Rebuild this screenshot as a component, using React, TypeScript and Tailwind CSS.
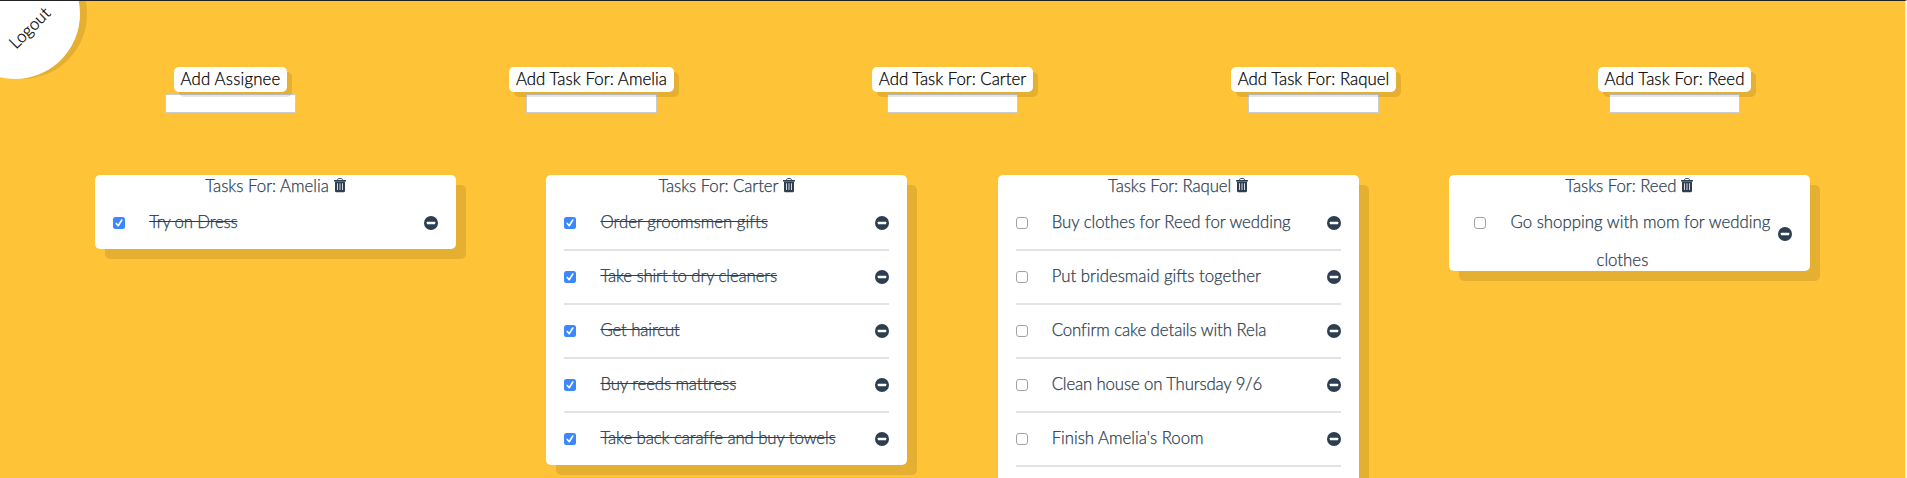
type Task = { text: string; done?: boolean; tracking?: string };
type Person = { title: string; tracking: string; tasks: Task[]; more?: boolean };

const forms = [
  { label: "Add Assignee", size: "w-[113px] tracking-[0.2px]" },
  { label: "Add Task For: Amelia", size: "w-[165px] tracking-[0.07px]" },
  { label: "Add Task For: Carter", size: "w-[161px]" },
  { label: "Add Task For: Raquel", size: "w-[165px] tracking-[0.05px]" },
  { label: "Add Task For: Reed", size: "w-[153px] tracking-[0.12px]" },
];

const people: Person[] = [
  {
    title: "Tasks For: Amelia",
    tracking: "tracking-normal",
    tasks: [{ text: "Try on Dress", done: true, tracking: "tracking-[-0.17px]" }],
  },
  {
    title: "Tasks For: Carter",
    tracking: "tracking-[-0.07px]",
    tasks: [
      { text: "Order groomsmen gifts", done: true, tracking: "tracking-[0.02px]" },
      { text: "Take shirt to dry cleaners", done: true, tracking: "tracking-[-0.12px]" },
      { text: "Get haircut", done: true, tracking: "tracking-[-0.12px]" },
      { text: "Buy reeds mattress", done: true, tracking: "tracking-[-0.1px]" },
      { text: "Take back caraffe and buy towels", done: true, tracking: "tracking-[-0.09px]" },
    ],
  },
  {
    title: "Tasks For: Raquel",
    tracking: "tracking-[-0.08px]",
    more: true,
    tasks: [
      { text: "Buy clothes for Reed for wedding", tracking: "tracking-[-0.04px]" },
      { text: "Put bridesmaid gifts together" },
      { text: "Confirm cake details with Rela", tracking: "tracking-[-0.07px]" },
      { text: "Clean house on Thursday 9/6", tracking: "tracking-[-0.14px]" },
      { text: "Finish Amelia's Room" },
    ],
  },
  {
    title: "Tasks For: Reed",
    tracking: "tracking-[-0.04px]",
    tasks: [{ text: "Go shopping with mom for wedding clothes", tracking: "tracking-[0.02px]" }],
  },
];

function Trash() {
  return (
    <svg viewBox="0 0 12 15" className="mt-[3px] h-[15px] w-3 shrink-0" fill="currentColor">
      <path d="M3.4 2.2 4 .8Q4.2.5 4.6.5h2.8q.4 0 .6.3l.6 1.4" fill="none" stroke="currentColor" strokeWidth=".9" />
      <rect y="2" width="12" height="1.6" rx=".3" />
      <path
        fillRule="evenodd"
        d="M1 3.4h10v9.4q0 1.5-1.4 1.5H2.4Q1 14.3 1 12.8ZM3.2 5.2v6.900h.8V5.200ZM5.600 5.200v6.900h.8V5.200ZM8 5.200v6.900h.8V5.200Z"
      />
    </svg>
  );
}

function Minus() {
  return (
    <svg viewBox="0 0 14 14" className="size-3.5 shrink-0">
      <circle cx="7" cy="7" r="7" fill="#2c3e50" />
      <rect x="2.8" y="5.8" width="8.4" height="2.4" rx=".4" fill="#fff" />
    </svg>
  );
}

function Checkbox({ done }: { done?: boolean }) {
  return done ? (
    <svg viewBox="0 0 12 12" className="mr-[24px] inline-block size-3 align-[-1px]">
      <rect width="12" height="12" rx="2.5" fill="#3b87fd" />
      <path d="m3.2 6.4 2 2.3 3.6-5.7" fill="none" stroke="#fff" strokeWidth="1.6" strokeLinecap="round" strokeLinejoin="round" />
    </svg>
  ) : (
    <span className="mr-[24px] inline-block size-3 rounded-[3px] border border-[#a3a3a3] bg-white align-[-1px]" />
  );
}

function Card({ person }: { person: Person }) {
  return (
    <section
      className={`w-[361px] rounded-[5px] bg-white shadow-[10px_10px_0_rgba(0,0,0,0.1)] ${person.more ? "pb-[54px]" : ""}`}
    >
      <h2 className={`flex h-[22px] justify-center gap-[5px] leading-[22px] ${person.tracking}`}>
        {person.title}
        <Trash />
      </h2>
      <ul className="px-[18px]">
        {person.tasks.map((task, i) => {
          const last = i === person.tasks.length - 1 && !person.more;
          const long = task.text.length > 36;
          return (
            <li
              key={task.text}
              className={`flex justify-between ${long ? "h-[74px] items-center" : last ? "h-[52px]" : "h-[54px] border-b-2 border-[#e3e3e3]"}`}
            >
              <div className={`pt-[6px] leading-[38px] ${long ? "flex-1 self-start text-center" : ""}`}>
                <Checkbox done={task.done} />
                <span className={`${task.tracking ?? "tracking-normal"} ${task.done ? "line-through" : ""}`}>{task.text}</span>
              </div>
              <div className={long ? "" : "pt-[19px]"}>
                <Minus />
              </div>
            </li>
          );
        })}
      </ul>
    </section>
  );
}

export default function App() {
  return (
    <div className="relative h-[478px] overflow-hidden border-t border-r-2 border-t-[#222] border-r-[#f3f3f3] bg-[#ffc338] font-[Lato,sans-serif] text-[16.8px] font-light text-[#2c3e50] [-webkit-text-stroke:0.25px_currentColor]">
      <button className="absolute top-[-52px] left-[-50px] flex size-[130px] -rotate-45 items-center justify-center rounded-full bg-white text-black shadow-[5px_5px_0_rgba(0,0,0,0.1)]">
        <span className="pt-[40px] pl-[1px] leading-none tracking-[0.1px]">Logout</span>
      </button>
      <div className="flex justify-around px-[50px] pt-[66px] text-black">
        {forms.map((f) => (
          <form key={f.label} className="flex w-[361px] flex-col items-center">
            <label
              className={`relative z-10 h-[25px] rounded-[5px] bg-white text-center leading-[24px] whitespace-nowrap shadow-[5px_5px_0_rgba(0,0,0,0.1)] ${f.size}`}
            >
              {f.label}
            </label>
            <input className="mt-0.5 h-[19px] w-[131px] border border-[#ccc] bg-white" />
          </form>
        ))}
      </div>
      <main className="mt-[62px] flex items-start justify-around px-[50px]">
        {people.map((p) => (
          <Card key={p.title} person={p} />
        ))}
      </main>
    </div>
  );
}
